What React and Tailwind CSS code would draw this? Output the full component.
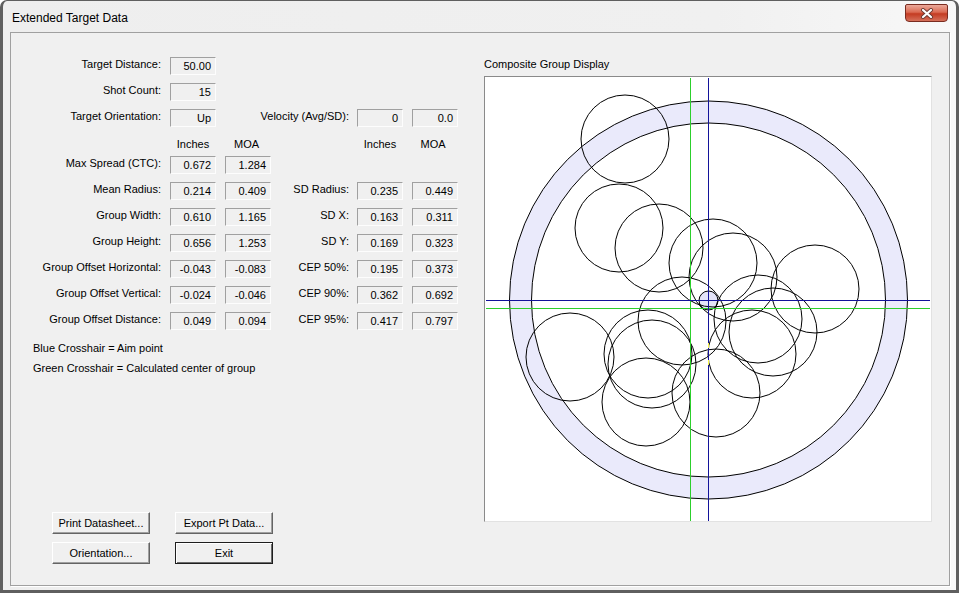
import React from 'react';

const shots = [
  [625, 139], [619, 228], [659, 248], [713, 263], [733, 277],
  [815, 289], [758, 319], [773, 332], [682, 321], [648, 354],
  [652, 364], [646, 402], [716, 393], [752, 354], [570, 357],
];

const stats = [
  { label: 'Max Spread (CTC):', inches: '0.672', moa: '1.284' },
  { label: 'Mean Radius:', inches: '0.214', moa: '0.409', sd: 'SD Radius:', sdIn: '0.235', sdMoa: '0.449' },
  { label: 'Group Width:', inches: '0.610', moa: '1.165', sd: 'SD X:', sdIn: '0.163', sdMoa: '0.311' },
  { label: 'Group Height:', inches: '0.656', moa: '1.253', sd: 'SD Y:', sdIn: '0.169', sdMoa: '0.323' },
  { label: 'Group Offset Horizontal:', inches: '-0.043', moa: '-0.083', sd: 'CEP 50%:', sdIn: '0.195', sdMoa: '0.373' },
  { label: 'Group Offset Vertical:', inches: '-0.024', moa: '-0.046', sd: 'CEP 90%:', sdIn: '0.362', sdMoa: '0.692' },
  { label: 'Group Offset Distance:', inches: '0.049', moa: '0.094', sd: 'CEP 95%:', sdIn: '0.417', sdMoa: '0.797' },
];

const Field = ({ value }) => (
  <div className="w-[46px] h-[18px] shrink-0 border border-t-[#a0a0a0] border-l-[#a0a0a0] border-r-[#fdfdfd] border-b-[#fdfdfd] flex items-center justify-end pr-[4px] pt-[1px]">
    {value}
  </div>
);

const Label = ({ w, children }) => (
  <div className={`${w} shrink-0 text-right whitespace-nowrap pb-[3px]`}>{children}</div>
);

const Button = ({ children, isDefault }) => (
  <button
    className={
      isDefault
        ? 'w-[98px] h-[22px] bg-[#f0f0f0] border border-[#1e1e1e] shadow-[inset_1px_1px_0_#ffffff,inset_-1px_-1px_0_#6b6b6b] text-[11px]'
        : 'w-[98px] h-[22px] bg-[#f0f0f0] border border-t-[#ffffff] border-l-[#ffffff] border-r-[#646464] border-b-[#646464] shadow-[inset_-1px_-1px_0_#a0a0a0] text-[11px]'
    }
  >
    {children}
  </button>
);

const GroupDisplay = () => (
  <svg width="446" height="444" viewBox="485 77 446 444" className="block">
    <rect x="485" y="77" width="446" height="444" fill="#ffffff" />
    {/* scoring ring */}
    <circle cx="708.5" cy="300" r="199" fill="#eaeafb" stroke="#000" strokeWidth="1" />
    <circle cx="708.5" cy="300" r="177" fill="#ffffff" stroke="#000" strokeWidth="1" />
    <circle cx="708.5" cy="300.5" r="9.5" fill="#e4e4f8" stroke="#000" strokeWidth="1" />
    {shots.map(([x, y], i) => (
      <circle key={i} cx={x} cy={y} r="44" fill="none" stroke="#000" strokeWidth="1" />
    ))}
    {/* green = group center, blue = aim point */}
    <g shapeRendering="crispEdges" strokeWidth="1">
      <line x1="486" y1="308.5" x2="930" y2="308.5" stroke="#2ccf2c" />
      <line x1="690.5" y1="78" x2="690.5" y2="521" stroke="#2ccf2c" />
      <line x1="486" y1="300.5" x2="930" y2="300.5" stroke="#13139a" />
      <line x1="708.5" y1="78" x2="708.5" y2="521" stroke="#13139a" />
      <line x1="708.5" y1="343" x2="708.5" y2="348" stroke="#f4f44a" />
      <line x1="708.5" y1="360" x2="708.5" y2="365" stroke="#f4f44a" />
    </g>
  </svg>
);

const App = () => {
  return (
    <div className="w-[959px] h-[593px] bg-white font-['Liberation_Sans',Arial,sans-serif] text-[11px] text-black">
      <div className="w-full h-full flex flex-col border-x-[3px] border-b-[3px] border-t border-[#5f5f5f] rounded-t-[7px] bg-[linear-gradient(to_right,#eeeeee,#f0f0f0_75%,#f8f8f8)]">
        {/* title bar */}
        <div className="h-[31px] shrink-0 flex justify-between">
          <div className="pl-[9px] pt-[10px] text-[12px] leading-[14px]">Extended Target Data</div>
          <div className="mr-[8px] mt-[3px] w-[43px] h-[18px] rounded-b-[4px] rounded-t-[2px] border border-[#7a2c20] bg-[linear-gradient(to_bottom,#eba99a,#db6a52_45%,#c43b22_55%,#d5705a)] flex items-center justify-center">
            <svg width="14" height="11" viewBox="0 0 14 11">
              <path d="M3 2 L11 9 M11 2 L3 9" stroke="#6d3a32" strokeWidth="4" strokeLinecap="round" />
              <path d="M3 2 L11 9 M11 2 L3 9" stroke="#ffffff" strokeWidth="2.2" strokeLinecap="round" />
            </svg>
          </div>
        </div>

        {/* group frame */}
        <div className="ml-[7px] mr-[6px] mb-[4px] flex-1 flex border border-[#a0a0a0] shadow-[1px_1px_0_#ffffff] bg-[#f0f0f0]">
          {/* left: statistics */}
          <div className="w-[473px] shrink-0 flex flex-col pt-[24px]">
            <div className="flex items-center h-[18px]">
              <Label w="w-[150px]">Target Distance:</Label>
              <div className="ml-[9px]"><Field value="50.00" /></div>
            </div>
            <div className="flex items-center h-[18px] mt-[8px]">
              <Label w="w-[150px]">Shot Count:</Label>
              <div className="ml-[9px]"><Field value="15" /></div>
            </div>
            <div className="flex items-center h-[18px] mt-[8px]">
              <Label w="w-[150px]">Target Orientation:</Label>
              <div className="ml-[9px]"><Field value="Up" /></div>
              <Label w="w-[133px]">Velocity (Avg/SD):</Label>
              <div className="ml-[8px]"><Field value="0" /></div>
              <div className="ml-[9px]"><Field value="0.0" /></div>
            </div>

            <div className="flex h-[14px] leading-[14px] mt-[10px]">
              <div className="w-[150px] shrink-0" />
              <div className="ml-[9px] w-[46px] text-center">Inches</div>
              <div className="ml-[9px] w-[46px] text-center pr-[3px]">MOA</div>
              <div className="w-[78px] shrink-0" />
              <div className="ml-[8px] w-[46px] text-center">Inches</div>
              <div className="ml-[9px] w-[46px] text-center pr-[4px]">MOA</div>
            </div>

            <div className="flex flex-col gap-[8px] mt-[5px]">
              {stats.map((s) => (
                <div key={s.label} className="flex items-center h-[18px]">
                  <Label w="w-[150px]">{s.label}</Label>
                  <div className="ml-[9px]"><Field value={s.inches} /></div>
                  <div className="ml-[9px]"><Field value={s.moa} /></div>
                  {s.sd && (
                    <>
                      <Label w="w-[78px]">{s.sd}</Label>
                      <div className="ml-[8px]"><Field value={s.sdIn} /></div>
                      <div className="ml-[9px]"><Field value={s.sdMoa} /></div>
                    </>
                  )}
                </div>
              ))}
            </div>

            <div className="mt-[8px] pl-[22px] leading-[20px]">
              <div>Blue Crosshair = Aim point</div>
              <div>Green Crosshair = Calculated center of group</div>
            </div>

            <div className="mt-auto pb-[21px] pl-[41px] grid grid-cols-[98px_98px] gap-x-[25px] gap-y-[8px]">
              <Button>Print Datasheet...</Button>
              <Button>Export Pt Data...</Button>
              <Button>Orientation...</Button>
              <Button isDefault>Exit</Button>
            </div>
          </div>

          {/* right: composite group display */}
          <div className="w-[448px] shrink-0 pt-[24px]">
            <div className="h-[14px] leading-[14px] mb-[5px]">Composite Group Display</div>
            <div className="w-[448px] h-[446px] border border-t-[#8a8a8a] border-l-[#8a8a8a] border-r-[#e2e2e2] border-b-[#e2e2e2]">
              <GroupDisplay />
            </div>
          </div>
        </div>
      </div>
    </div>
  );
};

export default App;
